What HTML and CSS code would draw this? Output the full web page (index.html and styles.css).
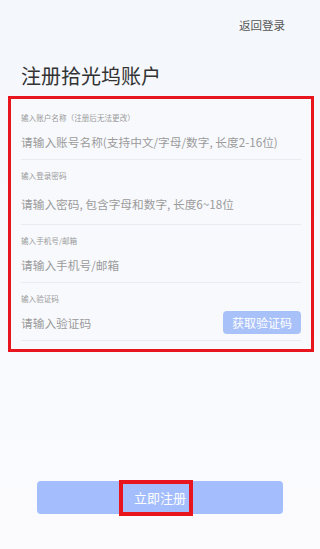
FILE: index.html
```html
<!DOCTYPE html>
<html lang="zh-CN">
<head>
  <meta charset="UTF-8" />
  <meta name="viewport" content="width=device-width, initial-scale=1.0" />
  <title>注册拾光坞账户</title>
  <link rel="stylesheet" href="styles.css">
</head>
<body>
  <div class="page">
    <div class="top-bar">
      <a class="back-link">返回登录</a>
    </div>

    <h1 class="title">注册拾光坞账户</h1>

    <div class="form-box">
      <div class="field">
        <div class="field-label">输入账户名称（注册后无法更改）</div>
        <div class="field-input">请输入账号名称(支持中文/字母/数字, 长度2-16位)</div>
      </div>
      <div class="field field-tall">
        <div class="field-label">输入登录密码</div>
        <div class="field-input">请输入密码, 包含字母和数字, 长度6~18位</div>
      </div>
      <div class="field">
        <div class="field-label">输入手机号/邮箱</div>
        <div class="field-input">请输入手机号/邮箱</div>
      </div>
      <div class="field">
        <div class="field-label">输入验证码</div>
        <div class="field-input">
          <span>请输入验证码</span>
          <button class="code-btn">获取验证码</button>
        </div>
      </div>
    </div>

    <button class="submit-btn"><span class="submit-text">立即注册</span></button>
  </div>
</body>
</html>
```

FILE: styles.css
```css
body {
  margin: 0;
  padding: 0;
  background: linear-gradient(#f4f7fc, #fbfbfe);
  font-family: "Noto Sans CJK SC", "Noto Sans", sans-serif;
}

.page {
  height: 549px;
  display: flex;
  flex-direction: column;
}

.top-bar {
  display: flex;
  justify-content: flex-end;
  padding: 16px 35px 0 0;
  height: 18px;
}

.back-link {
  font-size: 11.5px;
  line-height: 18px;
  color: #555;
}

.title {
  margin: 29px 0 0 21px;
  font-size: 20px;
  line-height: 26px;
  font-weight: normal;
  color: #333;
}

.form-box {
  margin: 7px 6px 0 8px;
  border: 3px solid #e8141e;
  background: #f8f9fd;
  padding: 3px 10px 8px 10px;
}

.field {
  padding-top: 10px;
  border-bottom: 1px solid #e8ebf1;
}

.field-label {
  font-size: 7.6px;
  line-height: 12px;
  color: #999;
  white-space: nowrap;
}

.field-input {
  height: 35px;
  display: flex;
  align-items: center;
  justify-content: space-between;
  font-size: 11.7px;
  color: #9b9b9b;
  white-space: nowrap;
}

.field-tall .field-input {
  height: 42px;
}

.code-btn {
  border: none;
  border-radius: 4px;
  background: #a9c1f9;
  color: #fff;
  font-family: inherit;
  font-size: 12px;
  height: 23px;
  width: 78px;
  padding: 0;
}

.submit-btn {
  margin: 129px 37px 0 37px;
  height: 33px;
  border: none;
  border-radius: 4px;
  background: #a4bdfd;
  display: flex;
  align-items: center;
  justify-content: center;
  padding: 0;
  font-family: inherit;
}

.submit-text {
  display: inline-block;
  margin-right: 8px;
  border: 4px solid #e8141e;
  padding: 0 3px 0 11px;
  height: 28px;
  line-height: 28px;
  font-size: 13px;
  color: #fff;
}
```
